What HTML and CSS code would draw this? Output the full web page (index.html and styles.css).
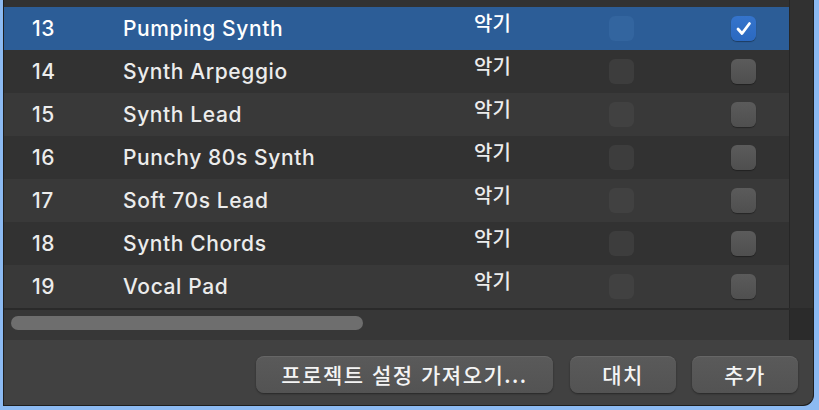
FILE: index.html
```html
<!DOCTYPE html>
<html lang="ko">
<head>
  <meta charset="UTF-8">
  <title>패치 목록</title>
  <link rel="stylesheet" href="styles.css">
</head>
<body>

<div class="window">
  <div class="main">
    <div class="table">
      <div class="row row-cut"></div>

      <div class="row selected">
        <span class="num">13</span>
        <span class="name">Pumping Synth</span>
        <span class="kind">악기</span>
        <span class="check disabled"></span>
        <span class="check checked">
          <svg width="25" height="25" viewBox="0 0 25 25"><path d="M7 13 L11 17.5 L18.5 7.5" fill="none" stroke="#fff" stroke-width="2.8" stroke-linecap="round" stroke-linejoin="round"/></svg>
        </span>
      </div>
      <div class="row">
        <span class="num">14</span>
        <span class="name">Synth Arpeggio</span>
        <span class="kind">악기</span>
        <span class="check disabled"></span>
        <span class="check"></span>
      </div>
      <div class="row alt">
        <span class="num">15</span>
        <span class="name">Synth Lead</span>
        <span class="kind">악기</span>
        <span class="check disabled"></span>
        <span class="check"></span>
      </div>
      <div class="row">
        <span class="num">16</span>
        <span class="name">Punchy 80s Synth</span>
        <span class="kind">악기</span>
        <span class="check disabled"></span>
        <span class="check"></span>
      </div>
      <div class="row alt">
        <span class="num">17</span>
        <span class="name">Soft 70s Lead</span>
        <span class="kind">악기</span>
        <span class="check disabled"></span>
        <span class="check"></span>
      </div>
      <div class="row">
        <span class="num">18</span>
        <span class="name">Synth Chords</span>
        <span class="kind">악기</span>
        <span class="check disabled"></span>
        <span class="check"></span>
      </div>
      <div class="row alt">
        <span class="num">19</span>
        <span class="name">Vocal Pad</span>
        <span class="kind">악기</span>
        <span class="check disabled"></span>
        <span class="check"></span>
      </div>
    </div>
    <div class="vscroll"></div>
  </div>

  <div class="hscroll-bar">
    <div class="hscroll">
      <div class="thumb"></div>
    </div>
    <div class="corner"></div>
  </div>

  <div class="footer">
    <button class="btn btn-wide">프로젝트 설정 가져오기...</button>
    <button class="btn">대치</button>
    <button class="btn">추가</button>
  </div>
</div>

</body>
</html>
```

FILE: styles.css
```css
body {
  margin: 0;
  background: #8cbaf2;
  font-family: Inter, "Noto Sans CJK KR", sans-serif;
  width: 819px;
  height: 410px;
  overflow: hidden;
}
.window {
  margin-left: 3px;
  width: 809px;
  height: 405px;
  background: #414141;
  border: 1px solid #1e1e1e;
  border-top: none;
  border-radius: 0 0 11px 0;
  overflow: hidden;
  display: flex;
  flex-direction: column;
}
.main {
  display: flex;
  height: 308px;
}
.table {
  width: 785px;
}
.vscroll {
  flex: 1;
  background: #313131;
  border-left: 1px solid #262626;
}
.row {
  display: grid;
  grid-template-columns: 91px 351px 135px 122px 25px;
  align-items: center;
  height: 43px;
  padding-left: 28px;
  background: #323232;
  color: #ececec;
  font-size: 21px;
  font-weight: 500;
}
.row.alt {
  background: #393939;
}
.row-cut {
  height: 7px;
}
.row.selected {
  background: #2c5d97;
  color: #fff;
}
.num {
  letter-spacing: 0.6px;
}
.name {
  letter-spacing: 0.6px;
  margin-top: -1px;
}
.kind {
  font-family: "Noto Sans CJK KR", sans-serif;
  font-size: 20px;
  font-weight: 500;
  margin-top: -12px;
}
.check {
  width: 25px;
  height: 25px;
  border-radius: 6px;
  background: linear-gradient(#5b5b5b, #4f4f4f);
  box-shadow: 0 1px 1px rgba(0, 0, 0, 0.35);
  display: block;
}
.check.disabled {
  background: #3d3d3d;
  box-shadow: none;
}
.row.alt .check.disabled {
  background: #414141;
}
.row.selected .check.disabled {
  background: #33659f;
}
.check.checked {
  background: linear-gradient(#3574cc, #2b69c0);
}
.check svg {
  display: block;
}
.hscroll-bar {
  display: flex;
  height: 30px;
  border-top: 2px solid #2a2a2a;
}
.hscroll {
  width: 785px;
  background: #373737;
  padding: 6px 0 0 7px;
  box-sizing: border-box;
}
.thumb {
  width: 352px;
  height: 14px;
  border-radius: 7px;
  background: #6e6e6e;
}
.corner {
  flex: 1;
  background: #2b2b2b;
  border-left: 1px solid #262626;
}
.footer {
  flex: 1;
  display: flex;
  justify-content: flex-end;
  align-items: flex-start;
  gap: 16px;
  padding: 16px 15px 0 0;
}
.btn {
  width: 106px;
  height: 37px;
  border: none;
  border-radius: 8px;
  background: linear-gradient(#5a5a5a, #535353);
  box-shadow: 0 1px 2px rgba(0, 0, 0, 0.4), inset 0 1px 0 rgba(255, 255, 255, 0.08);
  color: #f4f4f4;
  font-family: "Noto Sans CJK KR", sans-serif;
  font-size: 21px;
  font-weight: 500;
  letter-spacing: 1.5px;
  padding: 0 0 2px;
}
.btn-wide {
  width: 297px;
  margin-right: 1px;
}
```
